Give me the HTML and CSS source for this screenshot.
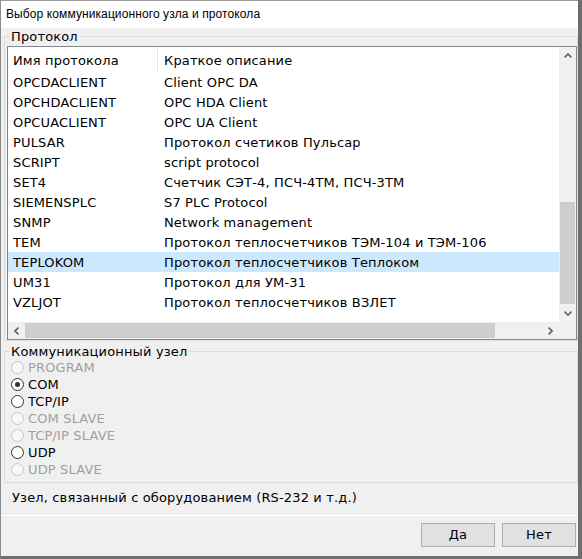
FILE: index.html
```html
<!DOCTYPE html>
<html lang="ru">
<head>
<meta charset="utf-8">
<title>Выбор коммуникационного узла и протокола</title>
<link rel="stylesheet" href="styles.css">
</head>
<body>
<div class="window">
  <div class="titlebar">Выбор коммуникационного узла и протокола</div>
  <div class="client">
    <div class="group group-proto">
      <div class="group-title">Протокол</div>
      <div class="listview">
        <div class="lv-main">
          <div class="lv-body">
            <div class="lv-header">
              <div class="c1 h1">Имя протокола</div>
              <div class="c2">Краткое описание</div>
            </div>
            <div class="lv-row"><div class="c1">OPCDACLIENT</div><div class="c2">Client OPC DA</div></div>
            <div class="lv-row"><div class="c1">OPCHDACLIENT</div><div class="c2">OPC HDA Client</div></div>
            <div class="lv-row"><div class="c1">OPCUACLIENT</div><div class="c2">OPC UA Client</div></div>
            <div class="lv-row"><div class="c1">PULSAR</div><div class="c2">Протокол счетиков Пульсар</div></div>
            <div class="lv-row"><div class="c1">SCRIPT</div><div class="c2">script protocol</div></div>
            <div class="lv-row"><div class="c1">SET4</div><div class="c2">Счетчик СЭТ-4, ПСЧ-4ТМ, ПСЧ-3ТМ</div></div>
            <div class="lv-row"><div class="c1">SIEMENSPLC</div><div class="c2">S7 PLC Protocol</div></div>
            <div class="lv-row"><div class="c1">SNMP</div><div class="c2">Network management</div></div>
            <div class="lv-row"><div class="c1">TEM</div><div class="c2">Протокол теплосчетчиков ТЭМ-104 и ТЭМ-106</div></div>
            <div class="lv-row selected"><div class="c1">TEPLOKOM</div><div class="c2">Протокол теплосчетчиков Теплоком</div></div>
            <div class="lv-row"><div class="c1">UM31</div><div class="c2">Протокол для УМ-31</div></div>
            <div class="lv-row"><div class="c1">VZLJOT</div><div class="c2">Протокол теплосчетчиков ВЗЛЕТ</div></div>
          </div>
          <div class="vscroll">
            <div class="sb-btn"><svg width="8" height="5" viewBox="0 0 8 5"><polyline points="0.6,4.4 4,1 7.4,4.4" fill="none" stroke="#606060" stroke-width="1.6"/></svg></div>
            <div class="v-track">
              <div class="v-space"></div>
              <div class="v-thumb"></div>
            </div>
            <div class="sb-btn"><svg width="8" height="5" viewBox="0 0 8 5"><polyline points="0.6,0.6 4,4 7.4,0.6" fill="none" stroke="#606060" stroke-width="1.6"/></svg></div>
          </div>
        </div>
        <div class="lv-bottom">
          <div class="hscroll">
            <div class="sb-btn"><svg width="5" height="8" viewBox="0 0 5 8"><polyline points="4.4,0.6 1,4 4.4,7.4" fill="none" stroke="#606060" stroke-width="1.6"/></svg></div>
            <div class="h-thumb"></div>
            <div class="h-space"></div>
            <div class="sb-btn"><svg width="5" height="8" viewBox="0 0 5 8"><polyline points="0.6,0.6 4,4 0.6,7.4" fill="none" stroke="#606060" stroke-width="1.6"/></svg></div>
          </div>
          <div class="corner"></div>
        </div>
      </div>
    </div>

    <div class="group group-node">
      <div class="group-title">Коммуникационный узел</div>
      <div class="radio disabled"><span class="circle"></span>PROGRAM</div>
      <div class="radio"><span class="circle checked"></span>COM</div>
      <div class="radio"><span class="circle"></span>TCP/IP</div>
      <div class="radio disabled"><span class="circle"></span>COM SLAVE</div>
      <div class="radio disabled"><span class="circle"></span>TCP/IP SLAVE</div>
      <div class="radio"><span class="circle"></span>UDP</div>
      <div class="radio disabled"><span class="circle"></span>UDP SLAVE</div>
    </div>

    <div class="status">Узел, связанный с оборудованием (RS-232 и т.д.)</div>

    <div class="buttons">
      <div class="btn">Да</div>
      <div class="btn">Нет</div>
    </div>
  </div>
</div>
</body>
</html>
```

FILE: styles.css
```css
html, body {
  margin: 0;
  padding: 0;
  background: #ffffff;
}

.window {
  width: 582px;
  height: 559px;
  box-sizing: border-box;
  border-left: 1px solid #8a8a8a;
  border-right: 4px solid #6e6e6e;
  border-bottom: 3px solid #6e6e6e;
  background: #f0f0f0;
  display: flex;
  flex-direction: column;
  font-family: "DejaVu Sans", sans-serif;
  font-size: 13px;
  letter-spacing: 0.15px;
  color: #000;
}

.titlebar {
  height: 28px;
  box-sizing: border-box;
  border-top: 1px solid #9a9a9a;
  background: #ffffff;
  font-family: "Liberation Sans", Arial, sans-serif;
  font-size: 12px;
  letter-spacing: 0.1px;
  line-height: 26px;
  padding-left: 5px;
  color: #000;
}

.client {
  flex: 1;
  display: flex;
  flex-direction: column;
}

.group {
  border: 1px solid #dcdcdc;
  margin-left: 3px;
}

.group-title {
  width: fit-content;
  margin: -8px 0 0 5px;
  padding: 0 1px;
  background: #f0f0f0;
  line-height: 15px;
  height: 15px;
}

.group-proto {
  margin-top: 8px;
  height: 305px;
  box-sizing: border-box;
}

.listview {
  margin: 2px 0 0 2px;
  width: 570px;
  height: 294px;
  box-sizing: border-box;
  border: 1px solid #828790;
  background: #ffffff;
  display: flex;
  flex-direction: column;
}

.lv-main {
  height: 275px;
  display: flex;
}

.lv-body {
  width: 551px;
  overflow: hidden;
}

.lv-header {
  height: 25px;
  display: flex;
  align-items: stretch;
  line-height: 27px;
  overflow: hidden;
}

.lv-header .h1 {
  border-right: 1px solid #e5e5e5;
}

.c1 {
  width: 150px;
  box-sizing: border-box;
  padding-left: 5px;
  flex: none;
  white-space: nowrap;
}

.c2 {
  padding-left: 6px;
  white-space: nowrap;
}

.lv-row {
  height: 20px;
  line-height: 22px;
  overflow: hidden;
  display: flex;
}

.lv-row.selected {
  background: #cce8ff;
}

.vscroll {
  width: 17px;
  background: #f0f0f0;
  display: flex;
  flex-direction: column;
}

.sb-btn {
  width: 17px;
  height: 17px;
  flex: none;
  display: flex;
  align-items: center;
  justify-content: center;
}

.sb-btn svg {
  display: block;
}

.v-track {
  flex: 1;
  display: flex;
  flex-direction: column;
}

.v-space {
  height: 138px;
}

.v-thumb {
  height: 102px;
  margin: 0 1px;
  background: #cdcdcd;
}

.lv-bottom {
  height: 17px;
  display: flex;
}

.hscroll {
  width: 551px;
  background: #f0f0f0;
  display: flex;
}

.h-thumb {
  width: 470px;
  margin: 1px 0;
  background: #cdcdcd;
}

.h-space {
  flex: 1;
}

.corner {
  width: 17px;
  background: #f0f0f0;
}

.group-node {
  margin-top: 10px;
  height: 132px;
  box-sizing: border-box;
}

.radio {
  height: 17px;
  display: flex;
  align-items: center;
  padding-left: 6px;
  white-space: nowrap;
}

.radio.disabled {
  color: #a0a0a0;
}

.circle {
  width: 13px;
  height: 13px;
  box-sizing: border-box;
  border: 1px solid #333333;
  border-radius: 50%;
  background: #ffffff;
  margin-right: 4px;
  flex: none;
  display: flex;
  align-items: center;
  justify-content: center;
}

.radio.disabled .circle {
  border-color: #c4c4c4;
  background: #f7f7f7;
}

.circle.checked::after {
  content: "";
  width: 5px;
  height: 5px;
  border-radius: 50%;
  background: #333333;
}

.status {
  line-height: 30px;
  padding-left: 11px;
  border-bottom: 1px solid #ffffff;
  box-sizing: border-box;
  height: 33px;
}

.buttons {
  display: flex;
  justify-content: flex-end;
  gap: 7px;
  padding: 7px 2px 0 0;
}

.btn {
  width: 74px;
  height: 24px;
  box-sizing: border-box;
  border: 1px solid #adadad;
  background: #e1e1e1;
  text-align: center;
  line-height: 22px;
}
```
